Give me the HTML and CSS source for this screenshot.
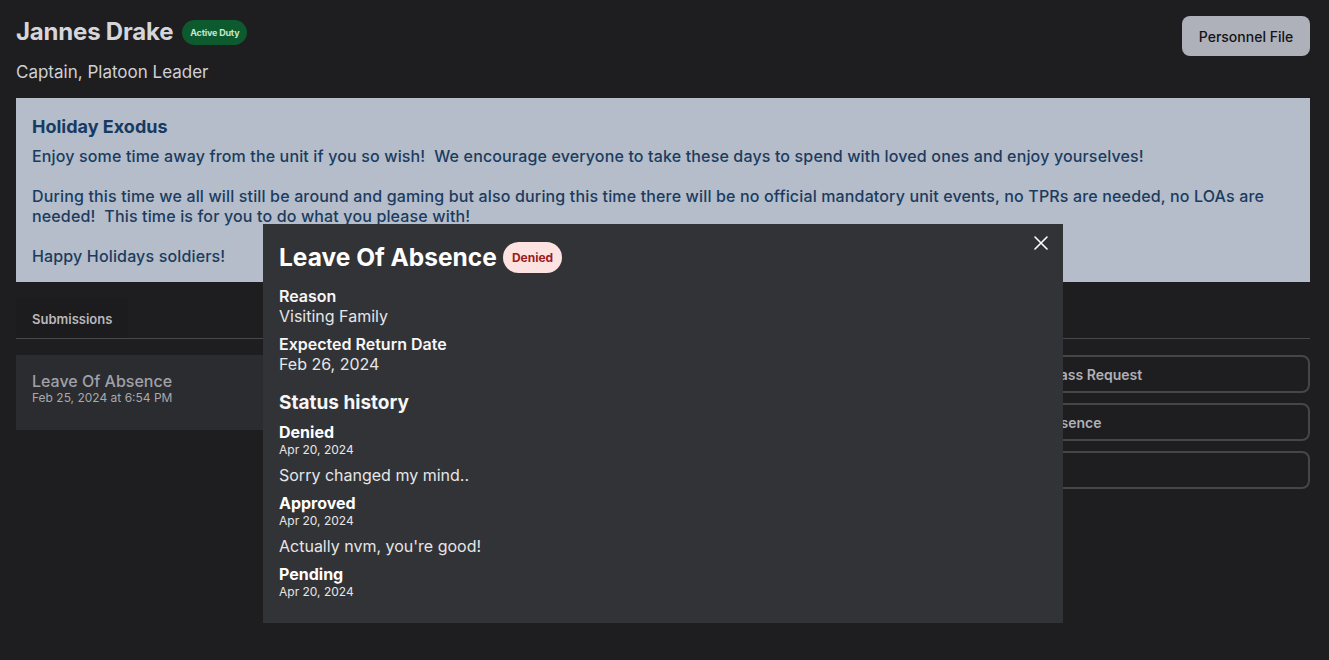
FILE: index.html
```html
<!DOCTYPE html>
<html lang="en">
<head>
<meta charset="utf-8">
<title>Jannes Drake</title>
<link rel="stylesheet" href="styles.css">
</head>
<body>
<div class="page">
  <header class="header">
    <div class="ident">
      <div class="name-row">
        <h1 class="name">Jannes Drake</h1>
        <span class="badge-duty">Active Duty</span>
      </div>
      <div class="rank">Captain, Platoon Leader</div>
    </div>
    <button class="btn-file">Personnel File</button>
  </header>

  <section class="banner">
    <h2 class="banner-title">Holiday Exodus</h2>
    <p>Enjoy some time away from the unit if you so wish!&nbsp; We encourage everyone to take these days to spend with loved ones and enjoy yourselves!</p>
    <p>During this time we all will still be around and gaming but also during this time there will be no official mandatory unit events, no TPRs are needed, no LOAs are needed!&nbsp; This time is for you to do what you please with!</p>
    <p>Happy Holidays soldiers!</p>
  </section>

  <nav class="tabs">
    <div class="tab">Submissions</div>
  </nav>

  <div class="content">
    <div class="list">
      <div class="sub-card">
        <div class="sub-title">Leave Of Absence</div>
        <div class="sub-date">Feb 25, 2024 at 6:54 PM</div>
      </div>
    </div>
    <div class="actions">
      <button class="action">Three Day Pass Request</button>
      <button class="action">Leave Of Absence</button>
      <button class="action">Discharge</button>
    </div>
  </div>
</div>

<div class="overlay">
  <div class="modal">
    <button class="close" aria-label="Close">
      <svg width="14" height="14" viewBox="0 0 14 14"><path d="M1 1L13 13M13 1L1 13" stroke="#fff" stroke-width="1.6" stroke-linecap="round"/></svg>
    </button>
    <div class="modal-head">
      <h2 class="modal-title">Leave Of Absence</h2>
      <span class="badge-denied">Denied</span>
    </div>
    <div class="field">
      <div class="label">Reason</div>
      <div class="value">Visiting Family</div>
    </div>
    <div class="field">
      <div class="label">Expected Return Date</div>
      <div class="value">Feb 26, 2024</div>
    </div>
    <h3 class="hist-title">Status history</h3>
    <div class="hist">
      <div class="hist-status">Denied</div>
      <div class="hist-date">Apr 20, 2024</div>
      <div class="hist-note">Sorry changed my mind..</div>
    </div>
    <div class="hist">
      <div class="hist-status">Approved</div>
      <div class="hist-date">Apr 20, 2024</div>
      <div class="hist-note">Actually nvm, you're good!</div>
    </div>
    <div class="hist">
      <div class="hist-status">Pending</div>
      <div class="hist-date">Apr 20, 2024</div>
    </div>
  </div>
</div>
</body>
</html>
```

FILE: styles.css
```css
* { box-sizing: border-box; }
html, body { margin: 0; padding: 0; }
body {
  background: #1e1e20;
  font-family: Inter, "Noto Sans", sans-serif;
  color: #d4d4d8;
  height: 660px;
  overflow: hidden;
}
.page { padding: 16px 19px 16px 16px; }

.header { display: flex; justify-content: space-between; align-items: flex-start; }
.name-row { display: flex; align-items: center; gap: 9px; }
.name { margin: 0; font-size: 24px; font-weight: 700; color: #d6d6da; line-height: 32px; letter-spacing: -0.2px; }
.badge-duty {
  background: #0c5a2e; color: #c4e8cf; font-size: 9px; font-weight: 700;
  padding: 0 8px; height: 25px; line-height: 25px; border-radius: 13px; letter-spacing: -0.2px;
}
.rank { margin-top: 16px; font-size: 17px; color: #d0d0d4; line-height: 16px; }
.btn-file {
  background: #aeb0ba; color: #141416; border: 0; border-radius: 8px;
  font-family: inherit; font-size: 14px; font-weight: 500;
  width: 128px; height: 40px; margin-top: 0;
}

.banner {
  margin-top: 18px; background: #b4bdc9; color: #1b3b60;
  padding: 19px 16px 16px 16px; height: 184px;
}
.banner-title { margin: 0 0 9px; font-size: 18px; font-weight: 700; line-height: 20px; color: #173a63; }
.banner p { margin: 0 0 20px; font-size: 16px; line-height: 20px; font-weight: 450; letter-spacing: 0.15px; }
.banner p:last-child { margin-bottom: 0; }

.tabs { margin-top: 16px; border-bottom: 1px solid #48484c; display: flex; }
.tab { padding: 13px 16px 11px; font-size: 13px; font-weight: 600; color: #b8b8bc; background: #1c1c1e; }

.content { display: grid; grid-template-columns: 1fr 346px; gap: 16px; margin-top: 16px; }
.sub-card { background: #2b2c30; height: 75px; padding: 17px 16px 15px; }
.sub-title { font-size: 16px; font-weight: 500; color: #a0a0a8; line-height: 18px; }
.sub-date { font-size: 12px; color: #a8a8ae; line-height: 15px; }
.actions { display: flex; flex-direction: column; gap: 10px; }
.action {
  height: 38px; background: transparent; border: 2px solid #464649; border-radius: 8px;
  color: #b0b0b6; font-family: inherit; font-size: 14px; font-weight: 600; text-align: left; padding: 0 12px;
}

.overlay {
  position: fixed; inset: 0; display: flex; justify-content: flex-start; align-items: flex-start;
  padding: 224px 0 0 263px;
}
.modal {
  position: relative; width: 800px; height: 399px; background: #323337; padding: 16px 16px; color: #f4f4f5;
}
.close {
  position: absolute; top: 12px; right: 15px; background: none; border: 0; padding: 0; width: 14px; height: 14px;
}
.close svg { display: block; }
.modal-head { display: flex; align-items: center; gap: 6px; height: 33px; }
.modal-title { margin: 0; font-size: 24.5px; font-weight: 700; line-height: 28px; color: #fff; letter-spacing: 0; }
.badge-denied {
  background: #fde2e2; color: #9b1c1c; font-size: 12px; font-weight: 700;
  padding: 0 9px; height: 31px; line-height: 31px; border-radius: 16px;
  align-self: flex-end;
}
.field { margin-top: 8px; }
.modal-head + .field { margin-top: 13px; }
.label { font-size: 16px; font-weight: 600; line-height: 20px; color: #f6f6f6; }
.value { font-size: 16px; line-height: 20px; color: #e6e6e8; }
.hist-title { margin: 18px 0 9px; font-size: 19px; font-weight: 700; line-height: 22px; color: #f6f6f6; }
.hist { margin-bottom: 9px; }
.hist-status { font-size: 16px; font-weight: 700; line-height: 19px; color: #fff; }
.hist-date { font-size: 12px; line-height: 15px; color: #e6e6e8; }
.hist-note { margin-top: 8px; font-size: 16px; line-height: 20px; color: #e6e6e8; }
```
